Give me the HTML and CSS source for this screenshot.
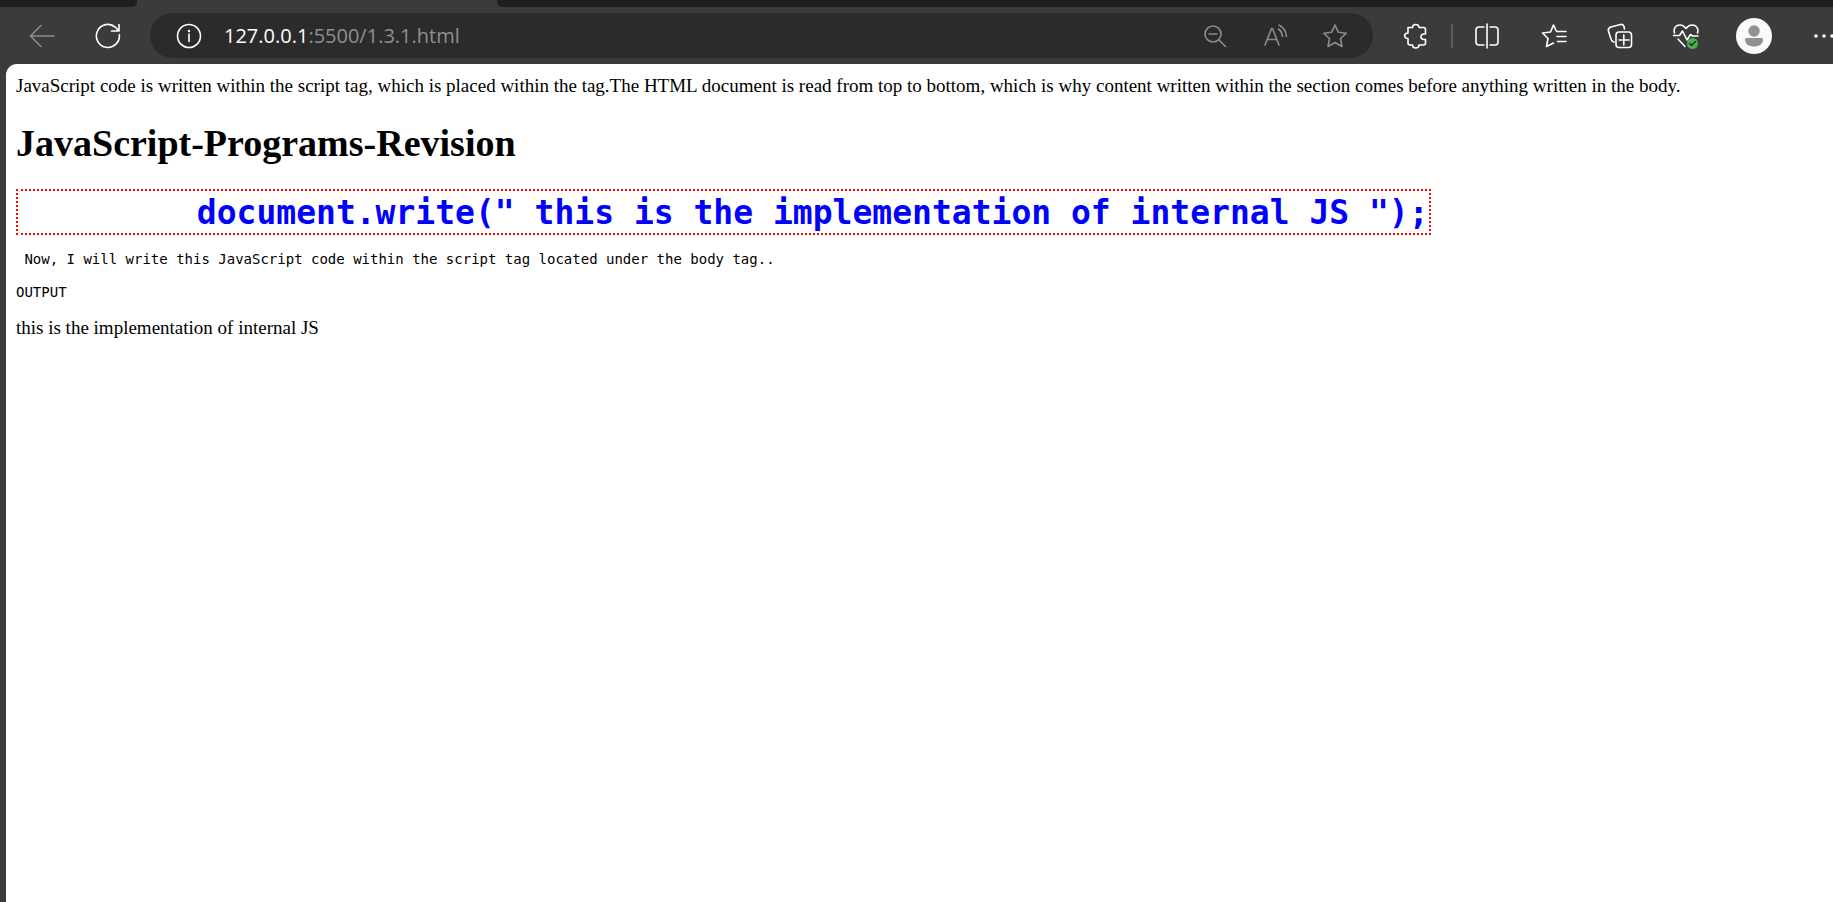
FILE: index.html
```html
<!DOCTYPE html>
<html lang="en">
<head>
<meta charset="utf-8">
<title>1.3.1.html</title>
<link rel="stylesheet" href="styles.css">
</head>
<body>
<header class="chrome">
  <div class="tabs"><div class="tab-before"></div><div class="tab-active"></div><div class="tab-after"></div></div>
  <nav class="toolbar" aria-label="Browser toolbar">
    <button class="tool dim" aria-label="Back"><svg width="26" height="26" viewBox="0 0 26 26"><path d="M25 13H1.500M12 2.500L1.500 13 12 23.500"/></svg></button>
    <button class="tool" aria-label="Refresh"><svg width="26" height="26" viewBox="0 0 26 26"><path d="M24.300 11.500A11.500 11.500 0 1 1 20.500 4.300L23.500 7.500M24 1.500V8H16.500"/></svg></button>
    <div class="omnibox">
      <button class="info" aria-label="Site information"><svg width="26" height="26" viewBox="0 0 26 26"><circle cx="13" cy="13" r="11.500"/><path d="M13 11v7.500"/><circle class="solid" cx="13" cy="8" r="1.200"/></svg></button>
      <div class="url" role="textbox" aria-label="Address" contenteditable="true" spellcheck="false"><span class="host">127.0.0.1</span>:5500/1.3.1.html</div>
      <button class="action dim" aria-label="Zoom out"><svg width="26" height="26" viewBox="0 0 26 26"><circle cx="11" cy="11" r="8"/><path d="M7 11h8M17 17l6.500 6.500"/></svg></button>
      <button class="action dim" aria-label="Read aloud"><svg width="26" height="26" viewBox="0 0 26 26"><path d="M3 22L9.500 5.500h1l6.500 16.500M5.500 16.500h9M16.500 6Q20 8.500 20.500 13.500M17 2Q24 5.500 24.500 13.500"/></svg></button>
      <button class="action dim" aria-label="Add to favorites"><svg width="26" height="26" viewBox="0 0 26 26"><path d="M13 2L16.300 9.200 24.300 10.200 18.500 15.500 20 23.500 13 19.500 6 23.500 7.500 15.500 1.700 10.200 9.700 9.200Z"/></svg></button>
    </div>
    <button class="tool extensions" aria-label="Extensions"><svg width="26" height="26" viewBox="0 0 26 26"><path d="M5 4.500h4.500C9.500 0.500 16 0.500 16 4.500h4.500q2 0 2 2V11h-1.500C17 11 17 16.500 21 16.500h1.500v3.500q0 2-2 2H16C16 26 9.500 26 9.500 22H7q-2 0-2-2v-4.500C.5 15.500.5 10 5 10Z"/></svg></button>
    <span class="divider"></span>
    <button class="tool" aria-label="Split screen"><svg width="26" height="26" viewBox="0 0 26 26"><path d="M9 4H4Q1 4 1 7v12q0 3 3 3h5M15 4h5q3 0 3 3v12q0 3-3 3h-5M12 1v24"/></svg></button>
    <button class="tool" aria-label="Favorites"><svg width="26" height="26" viewBox="0 0 26 26"><path d="M16.500 8.500H25M16 13.500h9M16.500 18.500H25M17 8.500h-1.500L12.500 2 9.500 9 1.500 10 7 15.500 5.500 23.500 12.500 20"/></svg></button>
    <button class="tool" aria-label="Collections"><svg width="26" height="26" viewBox="0 0 26 26"><rect x="9" y="9" width="15.500" height="15.500" rx="3"/><path d="M16.800 12v10M12 17h10M17.500 6L17 3.500Q16.300.8 13.500 1.500L4 4Q.8 5 1.400 8L4 16q.8 2.500 3 3"/></svg></button>
    <button class="tool" aria-label="Browser essentials"><svg width="28" height="28" viewBox="0 0 28 28"><path d="M2.500 11C1 6 4 3 8 3q3.500 0 6 3.500Q16.500 3 20 3c4 0 7 3 5.500 8M1.500 13.500h6L10.500 9l4.500 9 3.500-5.500 2 1.500h5.500M6 17l7 7.500"/><circle class="health" cx="20.500" cy="21.500" r="5.500"/><path class="check" d="M17.500 21.500l2 2 4-4"/></svg></button>
    <button class="tool profile" aria-label="Profile"><svg width="36" height="36" viewBox="0 0 36 36"><circle class="disc" cx="18" cy="18" r="18"/><circle class="person" cx="18" cy="13" r="5.700"/><path class="person" d="M10 20h16q1 0 1 1.500C27 26 23 28.500 18 28.500S9 26 9 21.500Q9 20 10 20Z"/></svg></button>
    <button class="more" aria-label="Settings and more"><svg width="44" height="26" viewBox="0 0 44 26"><g class="solid"><circle cx="27" cy="13" r="1.800"/><circle cx="35" cy="13" r="1.800"/><circle cx="43" cy="13" r="1.800"/></g></svg></button>
  </nav>
</header>
<main class="page">
  <p class="intro">JavaScript code is written within the script tag, which is placed within the tag.The HTML document is read from top to bottom, which is why content written within the section comes before anything written in the body.</p>
  <h1 class="title">JavaScript-Programs-Revision</h1>
  <pre class="sample">         document.write(" this is the implementation of internal JS ");</pre>
  <pre class="note"> Now, I will write this JavaScript code within the script tag located under the body tag..</pre>
  <pre class="note">OUTPUT</pre>
  <p class="result">this is the implementation of internal JS</p>
</main>
</body>
</html>
```
FILE: styles.css
```css
* { box-sizing: border-box; }
body {
  margin: 0;
  min-height: 100vh;
  display: flex;
  flex-direction: column;
  background: #3b3b3b;
  overflow-x: hidden;
}
.tabs { display: flex; height: 7px; }
.tab-before, .tab-after { background: #1f1f1f; }
.tab-before { width: 137px; border-bottom-right-radius: 5px; }
.tab-active { width: 360px; }
.tab-after { flex: 1; border-bottom-left-radius: 5px; }
.toolbar {
  display: flex;
  align-items: center;
  height: 57px;
  padding-left: 9px;
}
button {
  display: flex;
  align-items: center;
  justify-content: center;
  flex: none;
  height: 44px;
  padding: 0;
  border: 0;
  background: none;
  color: #fff;
}
svg {
  display: block;
  fill: none;
  stroke: currentColor;
  stroke-width: 1.6;
  stroke-linecap: round;
  stroke-linejoin: round;
}
.tool { width: 66px; }
.dim { color: #8c8c8c; }
.omnibox {
  display: flex;
  align-items: center;
  flex: 1;
  min-width: 0;
  height: 45px;
  margin-left: 9px;
  padding: 0 8px 0 26px;
  border-radius: 23px;
  background: #2b2b2b;
}
.info { width: 26px; }
.url {
  flex: 1;
  min-width: 0;
  margin-left: 22px;
  overflow: hidden;
  white-space: nowrap;
  outline: 0;
  font: 20px/30px "Open Sans", sans-serif;
  color: #8f8f8f;
}
.host { color: #fff; }
.action { width: 60px; }
.extensions { margin-left: 10px; }
.divider { width: 2px; height: 24px; margin: 0 2px; background: #5c5c5c; }
.profile { width: 70px; }
.more { width: 44px; }
.solid { fill: currentColor; stroke: none; }
.health { fill: #4caf50; stroke: none; }
.check { stroke: #1e3a1f; }
.disc { fill: #fafafa; stroke: none; }
.person { fill: #919191; stroke: none; }
.page {
  flex: 1;
  margin-left: 6px;
  padding: 10px;
  border-top-left-radius: 11px;
  background: #fff;
  color: #000;
  font: 19px/23px "Liberation Serif", serif;
}
.intro { margin: 0; }
.title { margin: 25px 0 24px; font-size: 38px; line-height: 43px; }
.sample {
  width: fit-content;
  margin: 0 0 15px;
  padding-top: 2px;
  border: 2px dotted #f00;
  color: #00f;
  font: bold 33px/40px "DejaVu Sans Mono", monospace;
}
.note { margin: 0 0 15px; font: 14px/18px "DejaVu Sans Mono", monospace; }
.result { margin: 0; }
```
